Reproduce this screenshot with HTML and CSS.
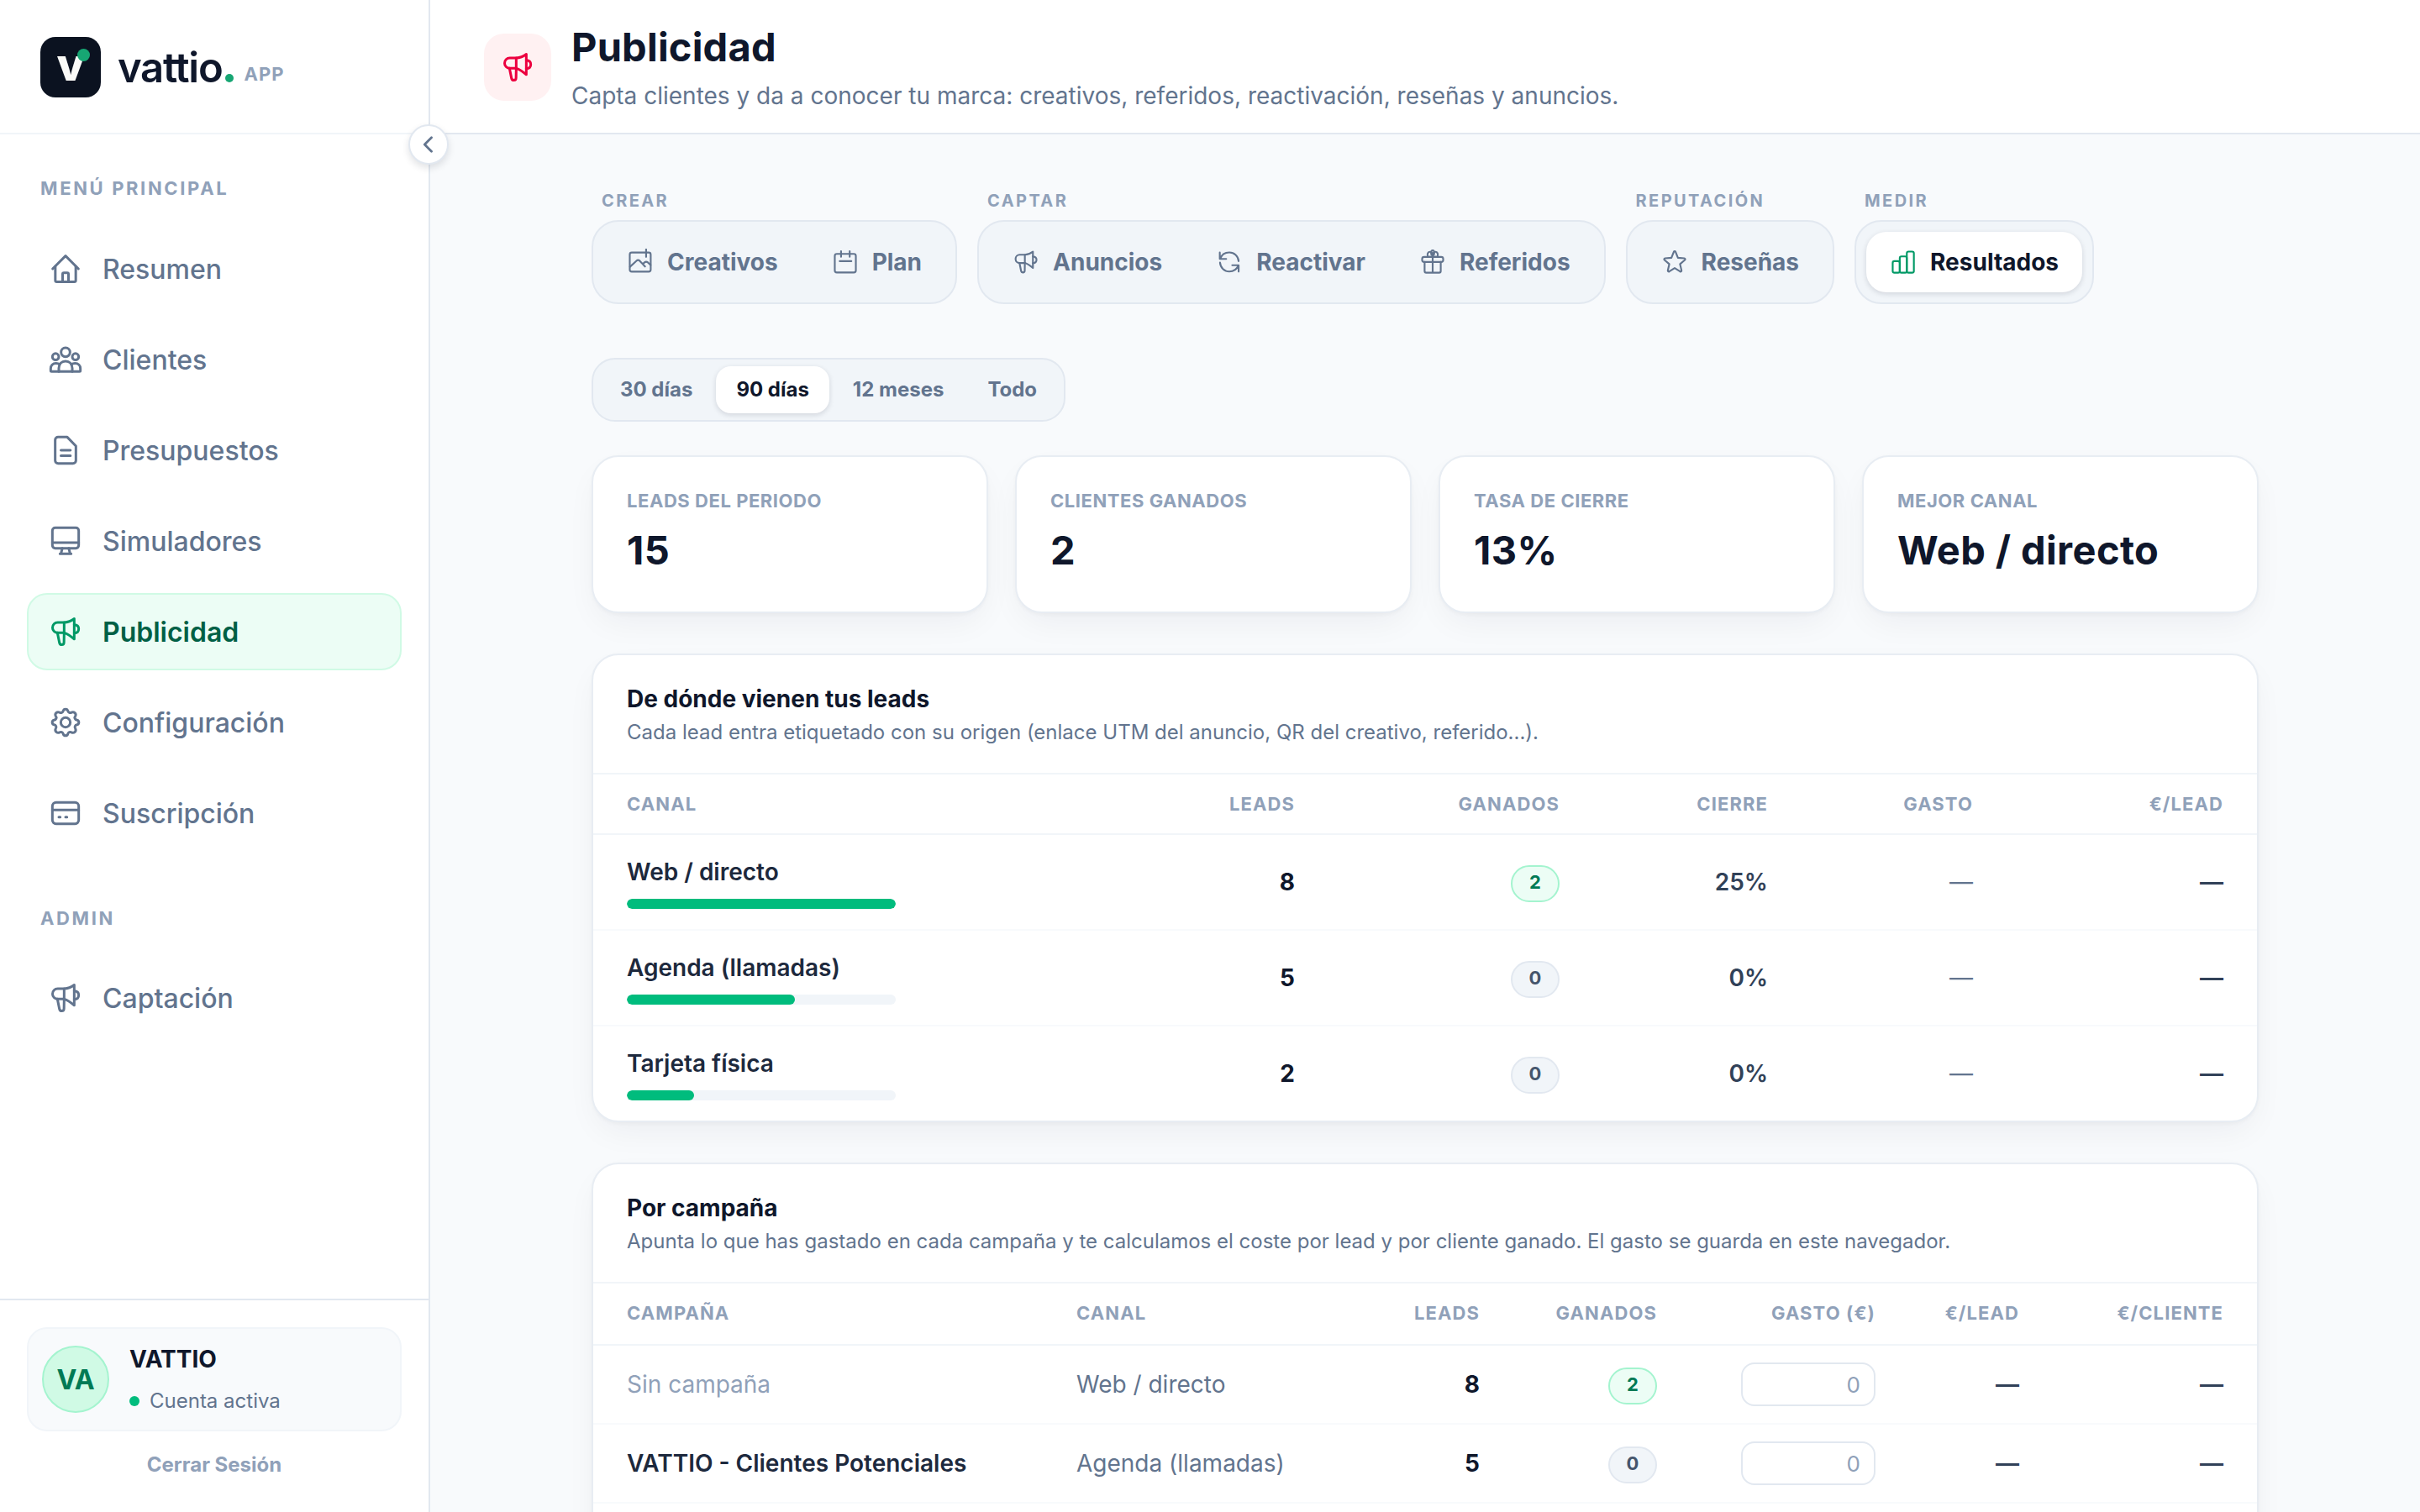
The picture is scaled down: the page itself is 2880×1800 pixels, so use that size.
FILE: index.html
```html
<!DOCTYPE html>
<html lang="es">
<head>
  <meta charset="UTF-8">
  <meta name="viewport" content="width=device-width, initial-scale=1.0">
  <title>Publicidad - Vattio</title>
  <link rel="stylesheet" href="styles.css">
</head>
<body>
  <!-- Iconos compartidos -->
  <svg class="sprite" xmlns="http://www.w3.org/2000/svg">
    <symbol id="i-home" viewBox="0 0 24 24">
      <path d="M2.8 12 12 2.8l9.2 9.2"/>
      <path d="M4.7 10.2v10.1c0 .6.4 1 1 1h12.6c.6 0 1-.4 1-1V10.2"/>
      <path d="M9.9 21.3v-5.5c0-.5.4-.9.9-.9h2.4c.5 0 .9.4.9.9v5.5"/>
    </symbol>
    <symbol id="i-users" viewBox="0 0 24 24">
      <circle cx="12" cy="6.8" r="3.2"/>
      <circle cx="4.9" cy="10" r="2.3"/>
      <circle cx="19.1" cy="10" r="2.3"/>
      <path d="M7.2 20.6v-2.4c0-3 2-5 4.8-5s4.8 2 4.8 5v2.4"/>
      <path d="M7.9 15.6c-.7-.6-1.7-.9-2.7-.9-2.3 0-3.8 1.5-3.8 3.7v1.6c0 .4.2.6.6.6h20c.4 0 .6-.2.6-.6v-1.6c0-2.2-1.5-3.7-3.8-3.7-1 0-2 .3-2.7.9"/>
    </symbol>
    <symbol id="i-doc" viewBox="0 0 24 24">
      <path d="M13.2 2.6H6.7c-1.2 0-2.1.9-2.1 2.1v14.600c0 1.2.9 2.1 2.1 2.1h10.6c1.2 0 2.1-.9 2.1-2.1V9z"/>
      <path d="M8.7 12h6.8M8.7 15.9h6.8"/>
    </symbol>
    <symbol id="i-monitor" viewBox="0 0 24 24">
      <rect x="2.6" y="2.6" width="18.8" height="14.6" rx="2"/>
      <path d="M2.6 13.2h18.8M9.7 17.2l-1 4M14.3 17.2l1 4M8 21.2h8"/>
    </symbol>
    <symbol id="i-mega" viewBox="0 0 24 24">
      <path d="M11 5.4H6.4a3.7 3.7 0 0 0 0 7.4H11z"/>
      <path d="M11 5.4c2.6-.1 5-1 7.2-2.7v14.6c-2.2-1.9-4.6-3.7-7.2-4.5"/>
      <path d="M18.2 7c2.1.1 3.2 1.4 3.2 3s-1.1 2.9-3.2 3"/>
      <path d="M6.2 12.8l1.4 6.9c.2 1 .8 1.6 1.7 1.6 1 0 1.6-.7 1.6-1.8l.1-6.700"/>
    </symbol>
    <symbol id="i-cog" viewBox="0 0 24 24">
      <path d="M10.325 3.817c.426-1.756 2.924-1.756 3.35 0a1.724 1.724 0 0 0 2.573 1.066c1.743-.94 3.71.926 2.77 2.57a1.724 1.724 0 0 0 1.165 2.872c1.756.426 1.756 2.924 0 3.35a1.724 1.724 0 0 0-1.166 2.773c.94 1.743-.926 3.61-2.77 2.67a1.724 1.724 0 0 0-2.572 1.065c-.426 1.756-2.924 1.756-3.35 0a1.724 1.724 0 0 0-2.573-1.066c-1.743.94-3.71-.926-2.77-2.67a1.724 1.724 0 0 0-1.165-2.772c-1.756-.426-1.756-2.924 0-3.35a1.724 1.724 0 0 0 1.166-2.873c-.94-1.643.926-3.51 2.77-2.57.996.508 2.296.07 2.572-1.065z"/>
      <circle cx="12" cy="12" r="3.4"/>
    </symbol>
    <symbol id="i-card" viewBox="0 0 24 24">
      <rect x="2.6" y="4.4" width="18.8" height="15.2" rx="2.6"/>
      <path d="M2.6 9.7h18.8M7.2 14.9h1M12 14.9h1"/>
    </symbol>
    <symbol id="i-image" viewBox="0 0 24 24">
      <rect x="2.6" y="3.5" width="18.7" height="17" rx="1.8"/>
      <path d="M17.2.6v6.8M2.8 16.2l5.6-5.2c1-.9 2.2-.9 3.2 0l4.6 5M14.4 13.6l1.4-1.3c1-.9 2-.8 3 0l2.4 2.3"/>
    </symbol>
    <symbol id="i-calendar" viewBox="0 0 24 24">
      <rect x="2.6" y="4.7" width="18.8" height="16.6" rx="1.8"/>
      <path d="M8.2 2.3v5M15.9 2.3v5M7 11.2h10.4"/>
    </symbol>
    <symbol id="i-refresh" viewBox="0 0 24 24">
      <path d="M3.5 3.5v5.7h5.7M20.3 11.2C20 6.7 16.4 3.4 12 3.4c-3.8 0-7 2.3-8.3 5.8"/>
      <path d="M20.3 20.5v-5.7h-5.7M3.7 12.5c.3 4.5 3.9 7.900 8.3 7.900 3.7 0 6.8-2.2 8.1-5.5"/>
    </symbol>
    <symbol id="i-gift" viewBox="0 0 24 24">
      <rect x="2.6" y="7.4" width="18.8" height="4.5" rx="1.8"/>
      <path d="M4.8 11.9v8.2c0 .8.6 1.4 1.4 1.4h11.6c.8 0 1.4-.6 1.4-1.4v-8.2M12 7.4v14.1"/>
      <path d="M12 7.4H7.7c-.9-2.5.1-4.6 2-4.6 1.6 0 2.3 1.8 2.3 4.6zM12 7.4h4.3c.9-2.5-.1-4.6-2-4.6-1.6 0-2.3 1.8-2.3 4.6z"/>
      <ellipse cx="12" cy="3.8" rx="1.4" ry="2.3"/>
    </symbol>
    <symbol id="i-star" viewBox="0 0 24 24">
      <path d="M11.2 2.9c.3-.8 1.3-.8 1.6 0l2.1 5.3 5.7.4c.8.1 1.1 1 .5 1.5l-4.3 3.7 1.3 5.6c.2.8-.6 1.4-1.3 1L12 17.4l-4.8 3c-.7.4-1.5-.2-1.3-1l1.3-5.6-4.3-3.7c-.6-.5-.3-1.4.5-1.5l5.7-.4z"/>
    </symbol>
    <symbol id="i-chart" viewBox="0 0 24 24">
      <rect x="2.6" y="11.2" width="6.3" height="10.3" rx="1.5"/>
      <rect x="8.9" y="6.9" width="6.3" height="14.6" rx="1.5"/>
      <rect x="15.2" y="2.6" width="6.3" height="18.9" rx="1.5"/>
    </symbol>
  </svg>

  <div class="layout">
    <aside class="sidebar">
      <div class="brand">
        <div class="brand-mark"><span class="brand-letter">v</span><span class="brand-spark"></span></div>
        <div class="brand-name">vattio<span class="brand-dot"></span></div>
        <span class="brand-tag">APP</span>
      </div>
      <button class="collapse" aria-label="Contraer menú">
        <svg viewBox="0 0 24 24"><path d="M15 5l-7 7 7 7"/></svg>
      </button>

      <nav class="nav">
        <div class="nav-title">MENÚ PRINCIPAL</div>
        <a class="nav-item"><svg class="icon"><use href="#i-home"/></svg>Resumen</a>
        <a class="nav-item"><svg class="icon"><use href="#i-users"/></svg>Clientes</a>
        <a class="nav-item"><svg class="icon"><use href="#i-doc"/></svg>Presupuestos</a>
        <a class="nav-item"><svg class="icon"><use href="#i-monitor"/></svg>Simuladores</a>
        <a class="nav-item active"><svg class="icon"><use href="#i-mega"/></svg>Publicidad</a>
        <a class="nav-item"><svg class="icon"><use href="#i-cog"/></svg>Configuración</a>
        <a class="nav-item"><svg class="icon"><use href="#i-card"/></svg>Suscripción</a>
        <div class="nav-title nav-title-admin">ADMIN</div>
        <a class="nav-item"><svg class="icon"><use href="#i-mega"/></svg>Captación</a>
      </nav>

      <div class="account">
        <div class="account-card">
          <div class="avatar">VA</div>
          <div class="account-info">
            <div class="account-name">VATTIO</div>
            <div class="account-status"><span class="status-dot"></span>Cuenta activa</div>
          </div>
        </div>
        <a class="logout">Cerrar Sesión</a>
      </div>
    </aside>

    <main class="main">
      <header class="header">
        <div class="header-icon"><svg class="icon"><use href="#i-mega"/></svg></div>
        <div class="header-text">
          <h1>Publicidad</h1>
          <p class="subtitle">Capta clientes y da a conocer tu marca: creativos, referidos, reactivación, reseñas y anuncios.</p>
        </div>
      </header>

      <div class="content">
        <div class="groups">
          <div class="group">
            <div class="group-label">CREAR</div>
            <div class="group-tabs">
              <a class="tab"><svg class="icon"><use href="#i-image"/></svg>Creativos</a>
              <a class="tab"><svg class="icon"><use href="#i-calendar"/></svg>Plan</a>
            </div>
          </div>
          <div class="group">
            <div class="group-label">CAPTAR</div>
            <div class="group-tabs">
              <a class="tab"><svg class="icon"><use href="#i-mega"/></svg>Anuncios</a>
              <a class="tab"><svg class="icon"><use href="#i-refresh"/></svg>Reactivar</a>
              <a class="tab"><svg class="icon"><use href="#i-gift"/></svg>Referidos</a>
            </div>
          </div>
          <div class="group">
            <div class="group-label">REPUTACIÓN</div>
            <div class="group-tabs">
              <a class="tab"><svg class="icon"><use href="#i-star"/></svg>Reseñas</a>
            </div>
          </div>
          <div class="group">
            <div class="group-label">MEDIR</div>
            <div class="group-tabs">
              <a class="tab active"><svg class="icon"><use href="#i-chart"/></svg>Resultados</a>
            </div>
          </div>
        </div>

        <div class="periods">
          <button class="period">30 días</button>
          <button class="period active">90 días</button>
          <button class="period">12 meses</button>
          <button class="period">Todo</button>
        </div>

        <div class="stats">
          <div class="card stat"><div class="stat-label">LEADS DEL PERIODO</div><div class="stat-value">15</div></div>
          <div class="card stat"><div class="stat-label">CLIENTES GANADOS</div><div class="stat-value">2</div></div>
          <div class="card stat"><div class="stat-label">TASA DE CIERRE</div><div class="stat-value">13%</div></div>
          <div class="card stat"><div class="stat-label">MEJOR CANAL</div><div class="stat-value">Web / directo</div></div>
        </div>

        <section class="card panel">
          <div class="panel-head">
            <h2>De dónde vienen tus leads</h2>
            <p>Cada lead entra etiquetado con su origen (enlace UTM del anuncio, QR del creativo, referido...).</p>
          </div>
          <table class="table channels">
            <colgroup><col class="c1"><col class="c2"><col class="c3"><col class="c4"><col class="c5"><col class="c6"></colgroup>
            <thead>
              <tr><th class="left">CANAL</th><th>LEADS</th><th>GANADOS</th><th>CIERRE</th><th>GASTO</th><th>€/LEAD</th></tr>
            </thead>
            <tbody>
              <tr>
                <td class="left"><div class="channel">Web / directo</div><div class="bar"><div class="bar-fill" style="width: 100%"></div></div></td>
                <td class="strong">8</td><td><span class="badge won">2</span></td><td>25%</td><td class="muted">—</td><td class="cost">—</td>
              </tr>
              <tr>
                <td class="left"><div class="channel">Agenda (llamadas)</div><div class="bar"><div class="bar-fill" style="width: 62.5%"></div></div></td>
                <td class="strong">5</td><td><span class="badge">0</span></td><td>0%</td><td class="muted">—</td><td class="cost">—</td>
              </tr>
              <tr>
                <td class="left"><div class="channel">Tarjeta física</div><div class="bar"><div class="bar-fill" style="width: 25%"></div></div></td>
                <td class="strong">2</td><td><span class="badge">0</span></td><td>0%</td><td class="muted">—</td><td class="cost">—</td>
              </tr>
            </tbody>
          </table>
        </section>

        <section class="card panel panel-campaigns">
          <div class="panel-head">
            <h2>Por campaña</h2>
            <p>Apunta lo que has gastado en cada campaña y te calculamos el coste por lead y por cliente ganado. El gasto se guarda en este navegador.</p>
          </div>
          <table class="table campaigns">
            <colgroup><col class="k1"><col class="k2"><col class="k3"><col class="k4"><col class="k5"><col class="k6"><col class="k7"></colgroup>
            <thead>
              <tr><th class="left">CAMPAÑA</th><th class="left">CANAL</th><th>LEADS</th><th>GANADOS</th><th>GASTO (€)</th><th>€/LEAD</th><th>€/CLIENTE</th></tr>
            </thead>
            <tbody>
              <tr>
                <td class="left none">Sin campaña</td><td class="left muted">Web / directo</td><td class="strong">8</td>
                <td><span class="badge won">2</span></td><td><input class="spend" type="text" placeholder="0"></td><td class="cost">—</td><td class="cost">—</td>
              </tr>
              <tr>
                <td class="left campaign">VATTIO - Clientes Potenciales</td><td class="left muted">Agenda (llamadas)</td><td class="strong">5</td>
                <td><span class="badge">0</span></td><td><input class="spend" type="text" placeholder="0"></td><td class="cost">—</td><td class="cost">—</td>
              </tr>
            </tbody>
          </table>
        </section>
      </div>
    </main>
  </div>
</body>
</html>
```

FILE: styles.css
```css
* {
  box-sizing: border-box;
}
body {
  margin: 0;
  font-family: Inter, "Liberation Sans", sans-serif;
  font-size: 28px;
  color: #0f172b;
  background: #f8fafc;
}
h1, h2, p {
  margin: 0;
}
.sprite {
  display: none;
}
.icon {
  width: 40px;
  height: 40px;
  flex: none;
  fill: none;
  stroke: currentColor;
  stroke-width: 1.8;
  stroke-linecap: round;
  stroke-linejoin: round;
}
.layout {
  display: flex;
  height: 1800px;
  overflow: hidden;
}

/* Barra lateral */
.sidebar {
  position: relative;
  width: 512px;
  flex: none;
  display: flex;
  flex-direction: column;
  background: #fff;
  border-right: 2px solid #e2e8f0;
}
.brand {
  display: flex;
  align-items: center;
  height: 160px;
  padding: 2px 48px 0;
  border-bottom: 2px solid #f1f5f9;
}
.brand-mark {
  position: relative;
  width: 72px;
  height: 72px;
  border-radius: 18px;
  background: #0b1220;
  color: #fafaf7;
  text-align: center;
}
.brand-letter {
  font-size: 54px;
  font-weight: 800;
  line-height: 65px;
}
.brand-spark {
  position: absolute;
  top: 14px;
  right: 13px;
  width: 15px;
  height: 15px;
  border-radius: 50%;
  background: #17a673;
}
.brand-name {
  display: flex;
  align-items: baseline;
  margin-left: 20px;
  font-size: 49px;
  font-weight: 600;
  letter-spacing: -1.3px;
}
.brand-dot {
  width: 10px;
  height: 10px;
  margin-left: 4px;
  border-radius: 50%;
  background: #17a673;
}
.brand-tag {
  margin: 15px 0 0 12px;
  font-size: 22px;
  font-weight: 700;
  letter-spacing: 1.1px;
  color: #90a1b9;
}
.collapse {
  position: absolute;
  top: 148px;
  right: -24px;
  z-index: 2;
  width: 48px;
  height: 48px;
  padding: 0;
  display: flex;
  align-items: center;
  justify-content: center;
  border: 2px solid #e2e8f0;
  border-radius: 50%;
  background: #fff;
  box-shadow: 0 4px 8px rgba(15, 23, 43, 0.12);
}
.collapse svg {
  width: 28px;
  height: 28px;
  fill: none;
  stroke: #62748e;
  stroke-width: 2.4;
  stroke-linecap: round;
  stroke-linejoin: round;
}
.nav {
  flex: 1;
  display: flex;
  flex-direction: column;
  gap: 16px;
  padding: 48px 32px;
}
.nav-title {
  height: 34px;
  padding-left: 16px;
  margin-bottom: 16px;
  font-size: 22px;
  font-weight: 700;
  line-height: 33px;
  letter-spacing: 2.64px;
  color: #90a1b9;
}
.nav-title-admin {
  margin-top: 46px;
  line-height: 35px;
}
.nav-item {
  display: flex;
  align-items: center;
  gap: 24px;
  height: 92px;
  padding: 0 24px;
  border: 2px solid transparent;
  border-radius: 24px;
  font-size: 32px;
  font-weight: 500;
  color: #62748e;
}
.nav-item.active {
  background: #ecfdf5;
  border-color: #d0fae5;
  color: #006045;
  font-weight: 600;
}
.nav-item.active .icon {
  color: #009966;
}
.account {
  height: 254px;
  padding: 32px;
  border-top: 2px solid #e2e8f0;
  text-align: center;
}
.account-card {
  display: flex;
  align-items: center;
  gap: 24px;
  height: 124px;
  padding: 0 16px;
  border: 2px solid #f1f5f9;
  border-radius: 24px;
  background: #f8fafc;
  text-align: left;
}
.avatar {
  width: 80px;
  height: 80px;
  border: 2px solid #a4f4cf;
  border-radius: 50%;
  background: #d0fae5;
  color: #007a55;
  font-size: 32px;
  font-weight: 700;
  line-height: 77px;
  text-align: center;
}
.account-info {
  padding-top: 2px;
}
.account-name {
  font-weight: 700;
  line-height: 40px;
}
.account-status {
  display: flex;
  align-items: center;
  gap: 12px;
  margin-top: 10px;
  font-size: 24px;
  line-height: 40px;
  color: #62748e;
}
.status-dot {
  width: 12px;
  height: 12px;
  border-radius: 50%;
  background: #00bc7d;
}
.logout {
  display: block;
  margin-top: 24px;
  font-size: 24px;
  font-weight: 700;
  line-height: 32px;
  color: #90a1b9;
}

/* Cabecera */
.main {
  flex: 1;
}
.header {
  display: flex;
  align-items: center;
  gap: 24px;
  height: 160px;
  padding: 2px 64px 0;
  background: #fff;
  border-bottom: 2px solid #e2e8f0;
}
.header-icon {
  display: flex;
  align-items: center;
  justify-content: center;
  width: 80px;
  height: 80px;
  border-radius: 24px;
  background: #fff1f2;
  color: #ec003f;
}
.header-text {
  padding-top: 2px;
}
h1 {
  font-size: 47px;
  font-weight: 700;
  line-height: 60px;
  letter-spacing: 0.2px;
}
.subtitle {
  line-height: 44px;
  margin-top: 6px;
  color: #62748e;
}

/* Contenido */
.content {
  width: 1984px;
  margin: 0 auto;
  padding-top: 64px;
}
.groups {
  display: flex;
  gap: 24px;
}
.group-label {
  padding-left: 12px;
  height: 38px;
  font-size: 20px;
  font-weight: 700;
  line-height: 31px;
  letter-spacing: 2.4px;
  color: #90a1b9;
}
.group-tabs {
  display: flex;
  gap: 8px;
  height: 100px;
  padding: 12px;
  border: 2px solid #e2e8f0;
  border-radius: 32px;
  background: #f1f5f9;
}
.tab {
  display: flex;
  align-items: center;
  gap: 16px;
  padding: 0 28px;
  border-radius: 24px;
  font-weight: 700;
  color: #62748e;
}
.tab .icon {
  width: 32px;
  height: 32px;
  stroke-width: 1.6;
}
.tab.active {
  background: #fff;
  color: #0f172b;
  box-shadow: 0 2px 6px rgba(15, 23, 43, 0.14);
}
.tab.active .icon {
  color: #009966;
}
.periods {
  display: inline-flex;
  gap: 4px;
  height: 76px;
  margin-top: 64px;
  padding: 8px;
  border: 2px solid #e2e8f0;
  border-radius: 28px;
  background: #f1f5f9;
}
.period {
  padding: 0 24px 2px;
  border: none;
  border-radius: 18px;
  background: transparent;
  font-family: inherit;
  font-size: 24px;
  font-weight: 700;
  color: #62748e;
}
.period.active {
  background: #fff;
  color: #0f172b;
  box-shadow: 0 2px 6px rgba(15, 23, 43, 0.14);
}
.card {
  background: #fff;
  border: 2px solid #e8edf3;
  border-radius: 32px;
  box-shadow: 0 2px 4px rgba(15, 23, 43, 0.03), 0 16px 40px -8px rgba(15, 23, 43, 0.06);
}
.stats {
  display: grid;
  grid-template-columns: repeat(4, 1fr);
  gap: 32px;
  margin-top: 40px;
}
.stat {
  height: 188px;
  padding: 36px 40px 0;
}
.stat-label {
  font-size: 22px;
  font-weight: 700;
  line-height: 32px;
  letter-spacing: 0.55px;
  color: #90a1b9;
}
.stat-value {
  margin-top: 11px;
  font-size: 47px;
  font-weight: 700;
  line-height: 64px;
  letter-spacing: 0.4px;
}
.panel {
  margin-top: 48px;
  overflow: hidden;
}
.panel-campaigns {
  padding-bottom: 60px;
}
.panel-head {
  height: 142px;
  padding: 32px 40px 0;
  border-bottom: 2px solid #f1f5f9;
}
.panel-head h2 {
  font-size: 28px;
  font-weight: 700;
  line-height: 40px;
}
.panel-head p {
  font-size: 24px;
  line-height: 40px;
  color: #62748e;
}

/* Tablas */
.table {
  width: 1980px;
  table-layout: fixed;
  border-collapse: separate;
  border-spacing: 0;
}
.c1 { width: 600px; }
.c2 { width: 235px; }
.c3 { width: 315px; }
.c4 { width: 248px; }
.c5 { width: 244px; }
.c6 { width: 338px; }
.k1 { width: 575px; }
.k2 { width: 300px; }
.k3 { width: 180px; }
.k4 { width: 211px; }
.k5 { width: 260px; }
.k6 { width: 171px; }
.k7 { width: 283px; }
.table th,
.table td {
  padding: 0;
  text-align: right;
}
.table th:first-child,
.table td:first-child {
  padding-left: 40px;
}
.table th:last-child,
.table td:last-child {
  padding-right: 40px;
}
.table .left {
  text-align: left;
}
.table th {
  height: 72px;
  padding-bottom: 1px;
  border-bottom: 2px solid #f1f5f9;
  font-size: 22px;
  font-weight: 700;
  letter-spacing: 1.1px;
  color: #90a1b9;
}
.table.campaigns th {
  height: 74px;
  padding-bottom: 3px;
}
.table td {
  height: 114px;
  border-bottom: 2px solid #f8fafc;
  font-weight: 500;
  color: #314158;
}
.channels tbody tr:last-child td {
  height: 112px;
  border-bottom: none;
}
.table.campaigns td {
  height: 94px;
}
.channel {
  font-weight: 600;
  line-height: 40px;
  color: #1d293d;
}
.bar {
  width: 320px;
  height: 12px;
  margin-top: 12px;
  border-radius: 6px;
  background: #f1f5f9;
  overflow: hidden;
}
.bar-fill {
  height: 100%;
  border-radius: 6px;
  background: #00bc7d;
}
.channels td {
  font-weight: 600;
}
.table .strong {
  font-weight: 700;
  color: #0f172b;
}
.table .muted {
  font-weight: 400;
  color: #62748e;
}
.table .none {
  font-weight: 400;
  color: #90a1b9;
}
.table .campaign {
  font-weight: 600;
  color: #1d293d;
}
.table .cost {
  font-weight: 600;
}
.badge {
  display: inline-flex;
  justify-content: center;
  width: 58px;
  height: 44px;
  margin-top: 4px;
  border: 2px solid #e2e8f0;
  border-radius: 22px;
  background: #f1f5f9;
  color: #45556c;
  font-size: 22px;
  font-weight: 700;
  line-height: 37px;
  vertical-align: middle;
}
.badge.won {
  border-color: #a4f4cf;
  background: #ecfdf5;
  color: #007a55;
}
.spend {
  width: 160px;
  height: 52px;
  padding: 0 16px;
  border: 2px solid #e2e8f0;
  border-radius: 16px;
  background: #fff;
  font-family: inherit;
  font-size: 26px;
  text-align: right;
  vertical-align: middle;
}
.spend::placeholder {
  color: #90a1b9;
}
```
